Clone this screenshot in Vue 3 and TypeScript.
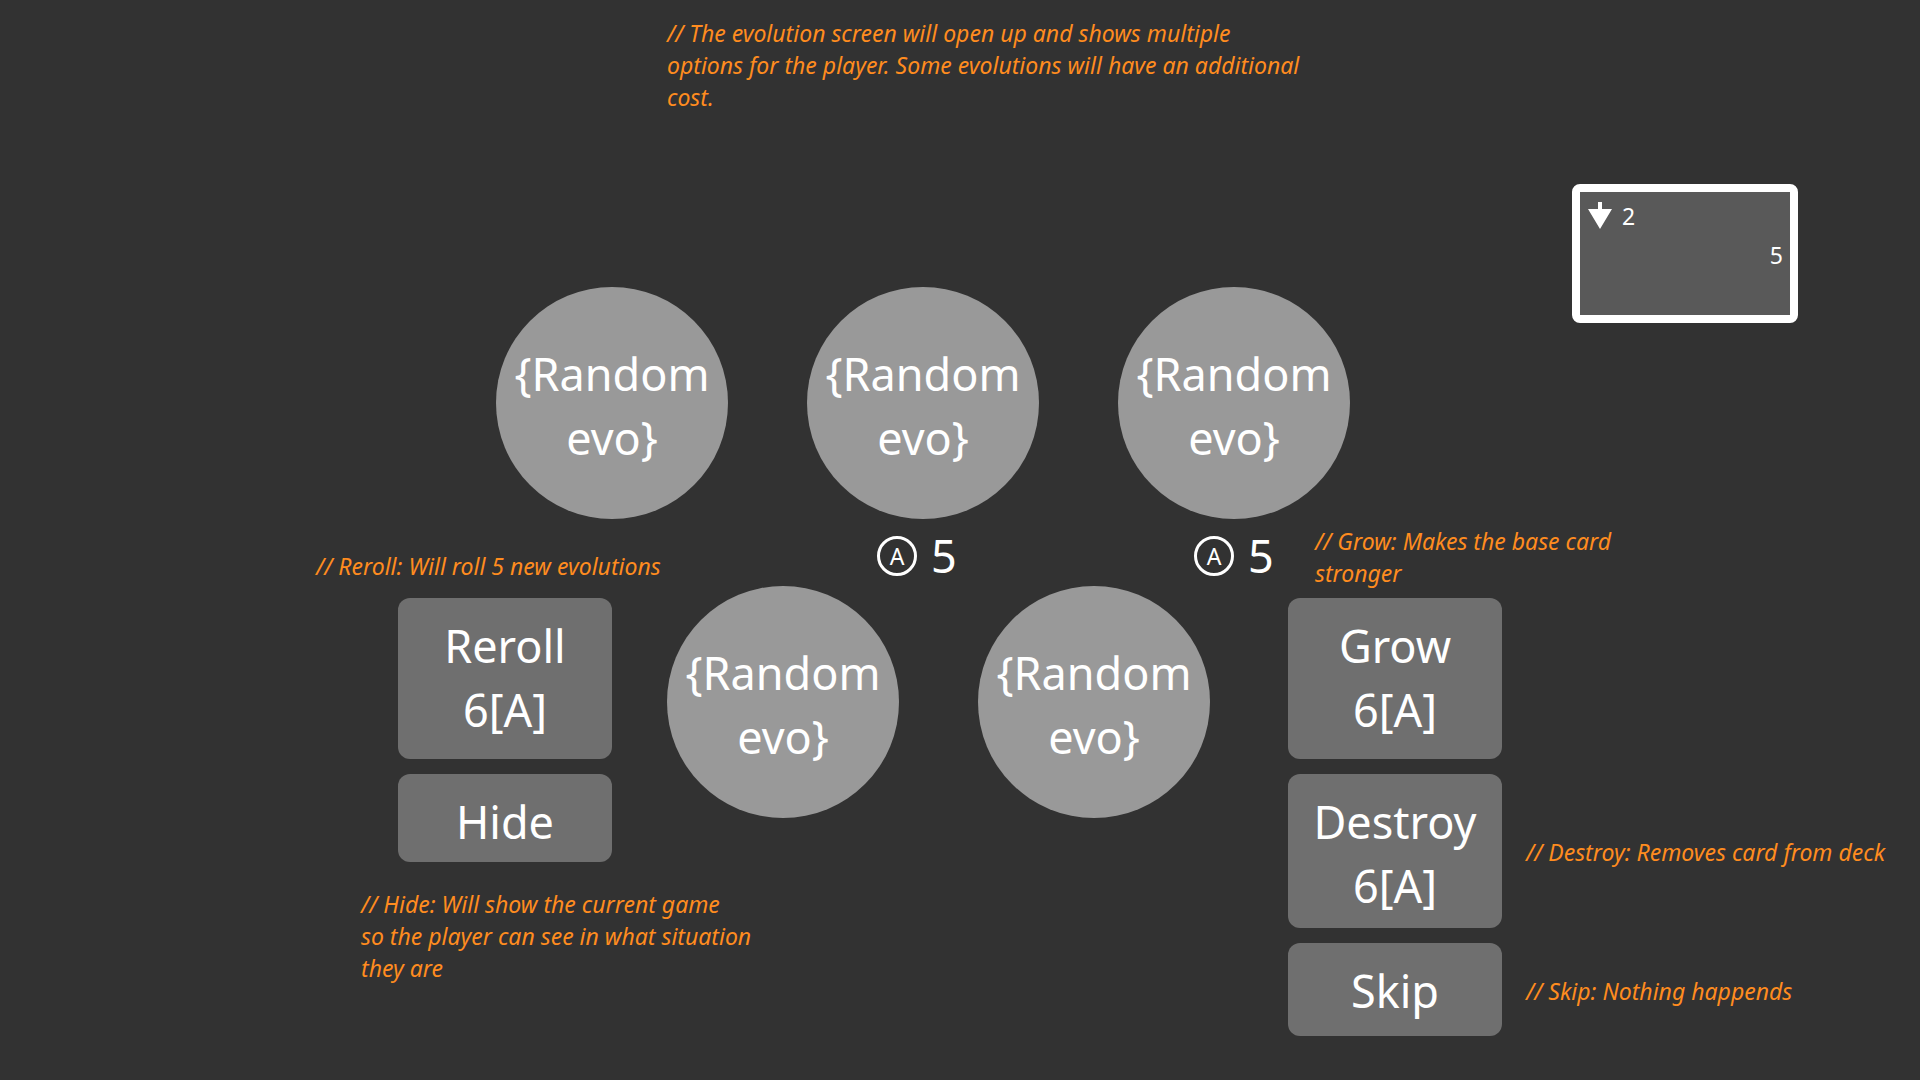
<script setup lang="ts">
interface Action {
  name: string
  cost?: string
}

const topEvolutions: string[] = ['{Random evo}', '{Random evo}', '{Random evo}']
const bottomEvolutions: string[] = ['{Random evo}', '{Random evo}']
const evolutionCosts: number[] = [5, 5]

const reroll: Action = { name: 'Reroll', cost: '6[A]' }
const hide: Action = { name: 'Hide' }
const grow: Action = { name: 'Grow', cost: '6[A]' }
const destroy: Action = { name: 'Destroy', cost: '6[A]' }
const skip: Action = { name: 'Skip' }
</script>

<template>
  <main class="screen">
    <header class="intro">
      <p class="note">// The evolution screen will open up and shows multiple<br />options for the player. Some evolutions will have an additional<br />cost.</p>
    </header>

    <section class="upper">
      <div class="evolutions">
        <button v-for="(evo, i) in topEvolutions" :key="i" type="button" class="evo">{{ evo }}</button>
      </div>
      <article class="card">
        <div class="card-row">
          <svg class="arrow" width="24" height="28" viewBox="0 0 24 28" aria-hidden="true">
            <path d="M10 0h4v7h10L12 27 0 7h10z" fill="#fff" />
          </svg>
          <span>2</span>
        </div>
        <div class="card-row end"><span>5</span></div>
      </article>
    </section>

    <section class="lower">
      <div class="left">
        <p class="note">// Reroll: Will roll 5 new evolutions</p>
        <div class="stack">
          <button type="button" class="action tall"><span>{{ reroll.name }}</span><span>{{ reroll.cost }}</span></button>
          <button type="button" class="action"><span>{{ hide.name }}</span></button>
        </div>
        <p class="note hide-note">// Hide: Will show the current game<br />so the player can see in what situation<br />they are</p>
      </div>

      <div class="middle">
        <div class="costs">
          <div v-for="(cost, i) in evolutionCosts" :key="i" class="cost">
            <span class="coin">A</span>
            <span>{{ cost }}</span>
          </div>
        </div>
        <div class="evolutions">
          <button v-for="(evo, i) in bottomEvolutions" :key="i" type="button" class="evo">{{ evo }}</button>
        </div>
      </div>

      <div class="right">
        <p class="note grow-note">// Grow: Makes the base card<br />stronger</p>
        <div class="choices">
          <button type="button" class="action tall"><span>{{ grow.name }}</span><span>{{ grow.cost }}</span></button>
          <span></span>
          <button type="button" class="action mid"><span>{{ destroy.name }}</span><span>{{ destroy.cost }}</span></button>
          <p class="note">// Destroy: Removes card from deck</p>
          <button type="button" class="action low"><span>{{ skip.name }}</span></button>
          <p class="note">// Skip: Nothing happends</p>
        </div>
      </div>
    </section>
  </main>
</template>

<style>
body {
  margin: 0;
  background: #323232;
}
</style>

<style scoped>
.screen {
  box-sizing: border-box;
  min-height: 100vh;
  padding-top: 17px;
  overflow: hidden;
  background: #323232;
  color: #fff;
  font-family: "Noto Sans", "Open Sans", sans-serif;
}

button {
  margin: 0;
  border: 0;
  color: inherit;
  font: inherit;
  cursor: pointer;
}

.note {
  margin: 0;
  color: #ff8c1f;
  font-size: 23px;
  font-style: italic;
  line-height: 32px;
  white-space: nowrap;
}

.intro {
  display: grid;
  grid-template-columns: 667fr 660px 593fr;
}

.intro .note {
  grid-column: 2;
}

.upper {
  display: grid;
  grid-template-columns: 496fr 854px 222fr 226px 122fr;
  align-items: start;
  margin-top: 71px;
}

.upper .evolutions {
  grid-column: 2;
  margin-top: 103px;
}

.evolutions {
  display: flex;
  gap: 79px;
}

.evo {
  box-sizing: border-box;
  flex: none;
  width: 232px;
  height: 232px;
  padding: 6px 16px 0;
  border-radius: 50%;
  background: #999;
  font-size: 45px;
  line-height: 64px;
}

.card {
  box-sizing: border-box;
  grid-column: 4;
  height: 139px;
  padding: 8px 7px 0 8px;
  border: 8px solid #fff;
  border-radius: 8px;
  background: #595959;
  font-size: 23px;
  line-height: 32px;
}

.card-row {
  display: flex;
  align-items: center;
  gap: 10px;
  margin-bottom: 7px;
}

.card-row.end {
  justify-content: flex-end;
}

.lower {
  display: grid;
  grid-template-columns: 316fr 296px 55fr 542px 79fr 607px 25fr;
  align-items: start;
  margin-top: 6px;
}

.left {
  grid-column: 2;
  padding-top: 25px;
}

.stack {
  display: flex;
  flex-direction: column;
  gap: 15px;
  margin: 16px 0 26px 82px;
}

.hide-note {
  margin-left: 45px;
}

.action {
  display: flex;
  flex-direction: column;
  align-items: center;
  box-sizing: border-box;
  width: 214px;
  height: 88px;
  padding: 16px 0 0;
  border-radius: 12px;
  background: #6f6f6f;
  font-size: 45px;
  line-height: 64px;
}

.action.tall {
  height: 161px;
}

.action.mid {
  height: 154px;
}

.action.low {
  height: 93px;
}

.middle {
  grid-column: 4;
  padding-top: 11px;
}

.costs {
  display: flex;
  gap: 237px;
  height: 40px;
  margin: 0 0 10px 210px;
}

.cost {
  display: flex;
  flex: none;
  align-items: center;
  gap: 14px;
  width: 80px;
  font-size: 45px;
  line-height: 40px;
}

.coin {
  box-sizing: border-box;
  width: 40px;
  height: 40px;
  border: 3px solid #fff;
  border-radius: 50%;
  font-size: 23px;
  line-height: 34px;
  text-align: center;
}

.right {
  grid-column: 6;
}

.grow-note {
  margin: 0 0 9px 27px;
}

.choices {
  display: grid;
  grid-template-columns: 214px 1fr;
  align-items: center;
  gap: 15px 24px;
}

.choices .note {
  padding-top: 2px;
}
</style>
